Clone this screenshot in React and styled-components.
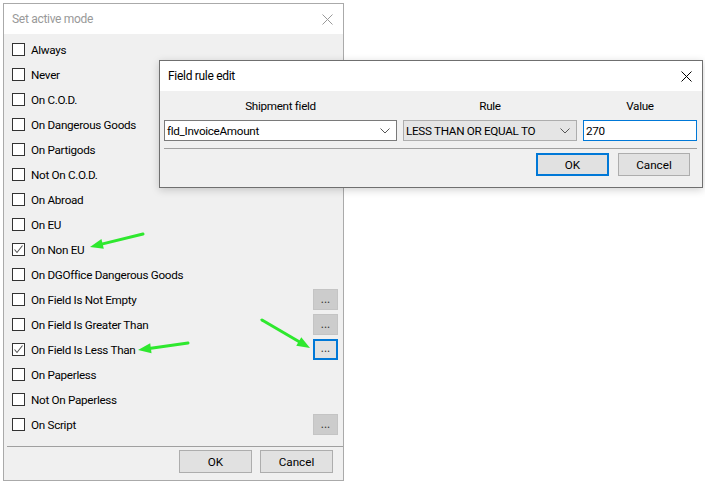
import React from 'react';
import styled, { createGlobalStyle } from 'styled-components';

const GlobalStyle = createGlobalStyle`
  html, body {
    margin: 0;
    padding: 0;
    background: #ffffff;
  }
  body {
    font-family: Roboto, "Liberation Sans", sans-serif;
    font-size: 11.7px;
    letter-spacing: -0.3px;
    color: #000;
  }
`;

const Desktop = styled.div`
  position: relative;
  width: 705px;
  height: 484px;
  overflow: hidden;
  background: #ffffff;
`;

const Window = styled.div`
  position: absolute;
  left: ${(p) => p.left}px;
  top: ${(p) => p.top}px;
  width: ${(p) => p.width}px;
  height: ${(p) => p.height}px;
  box-sizing: border-box;
  border: 1px solid ${(p) => (p.active ? '#6f6f6f' : '#aaaaaa')};
  background: #f0f0f0;
  display: flex;
  flex-direction: column;
  box-shadow: ${(p) => (p.active ? '0 2px 8px rgba(0,0,0,0.18)' : 'none')};
`;

const TitleBar = styled.div`
  height: 30px;
  flex: none;
  background: #ffffff;
  display: flex;
  align-items: center;
  justify-content: space-between;
  padding: 0 10px 0 8px;
  color: ${(p) => (p.active ? '#000' : '#999999')};
  font-size: 12px;
`;

const CloseIcon = ({ color }) => (
  <svg width="11" height="11" viewBox="0 0 11 11">
    <path d="M0.5 0.5 L10.5 10.5 M10.5 0.5 L0.5 10.5" stroke={color} strokeWidth="1" fill="none" />
  </svg>
);

const ModeList = styled.div`
  display: flex;
  flex-direction: column;
  padding: 3px 5px 0 8px;
`;

const ModeRow = styled.div`
  height: 25px;
  display: flex;
  align-items: center;
`;

const Box = styled.span`
  width: 13px;
  height: 13px;
  box-sizing: border-box;
  border: 1px solid #333333;
  background: #ffffff;
  display: inline-flex;
  align-items: center;
  justify-content: center;
  margin-right: 6px;
  flex: none;
`;

const Label = styled.span`
  white-space: nowrap;
`;

const DotsButton = styled.button`
  margin-left: auto;
  width: 25px;
  height: 21px;
  box-sizing: border-box;
  padding: 0 0 4px;
  font: inherit;
  font-size: 12px;
  line-height: 1;
  color: #333;
  background: ${(p) => (p.focused ? '#e1e1e1' : '#cccccc')};
  border: ${(p) => (p.focused ? '2px solid #0078d7' : '1px solid #c4c4c4')};
  display: flex;
  align-items: flex-end;
  justify-content: center;
`;

const Separator = styled.div`
  height: 1px;
  background: #a0a0a0;
  margin: ${(p) => p.margin};
`;

const ButtonRow = styled.div`
  display: flex;
  justify-content: flex-end;
  gap: ${(p) => p.gap}px;
  padding-right: ${(p) => p.right}px;
`;

const PushButton = styled.button`
  width: ${(p) => p.width || 73}px;
  height: 23px;
  box-sizing: border-box;
  font: inherit;
  color: #000;
  background: #e1e1e1;
  border: ${(p) => (p.primary ? '2px solid #0078d7' : '1px solid #adadad')};
  padding: 0;
`;

const RuleBody = styled.div`
  display: flex;
  flex-direction: column;
  padding: 0 5px 0 4px;
`;

const RuleGrid = styled.div`
  display: grid;
  grid-template-columns: 233px 174px 114px;
  column-gap: 6px;
`;

const Header = styled.div`
  height: 29px;
  display: flex;
  align-items: center;
  justify-content: center;
`;

const Combo = styled.div`
  height: 21px;
  box-sizing: border-box;
  border: 1px solid ${(p) => (p.disabled ? '#adadad' : '#7a7a7a')};
  background: ${(p) => (p.disabled ? '#e5e5e5' : '#ffffff')};
  display: flex;
  align-items: center;
  justify-content: space-between;
  padding: 0 6px 0 2px;
  white-space: nowrap;
`;

const TextInput = styled.div`
  height: 21px;
  box-sizing: border-box;
  border: 1px solid #0078d7;
  background: #ffffff;
  display: flex;
  align-items: center;
  padding-left: 2px;
`;

const Chevron = () => (
  <svg width="10" height="6" viewBox="0 0 10 6">
    <path d="M0.5 0.5 L5 5 L9.5 0.5" stroke="#555" strokeWidth="1" fill="none" />
  </svg>
);

const Check = () => (
  <svg width="11" height="11" viewBox="0 0 11 11">
    <path d="M1.5 5.5 L4 8.5 L9.5 1.5" stroke="#555" strokeWidth="1.1" fill="none" />
  </svg>
);

const ArrowLayer = styled.svg`
  position: absolute;
  left: 0;
  top: 0;
  pointer-events: none;
`;

const modes = [
  { label: 'Always' },
  { label: 'Never' },
  { label: 'On C.O.D.' },
  { label: 'On Dangerous Goods' },
  { label: 'On Partigods' },
  { label: 'Not On C.O.D.' },
  { label: 'On Abroad' },
  { label: 'On EU' },
  { label: 'On Non EU', checked: true },
  { label: 'On DGOffice Dangerous Goods' },
  { label: 'On Field Is Not Empty', dots: true },
  { label: 'On Field Is Greater Than', dots: true },
  { label: 'On Field Is Less Than', checked: true, dots: true, focused: true },
  { label: 'On Paperless' },
  { label: 'Not On Paperless' },
  { label: 'On Script', dots: true },
];

const arrows = [
  { x1: 143, y1: 234, x2: 90, y2: 247 },
  { x1: 262, y1: 320, x2: 310, y2: 348 },
  { x1: 188, y1: 343, x2: 138, y2: 350 },
];

const Arrow = ({ x1, y1, x2, y2 }) => {
  const a = Math.atan2(y2 - y1, x2 - x1);
  const len = 13;
  const half = 5;
  const bx = x2 - Math.cos(a) * len;
  const by = y2 - Math.sin(a) * len;
  const px = -Math.sin(a) * half;
  const py = Math.cos(a) * half;
  return (
    <g>
      <line x1={x1} y1={y1} x2={bx} y2={by} stroke="#2ee82e" strokeWidth="3" strokeLinecap="round" />
      <polygon points={`${x2},${y2} ${bx + px},${by + py} ${bx - px},${by - py}`} fill="#2ee82e" />
    </g>
  );
};

export default function App() {
  return (
    <Desktop>
      <GlobalStyle />
      <Window left={3} top={3} width={341} height={478}>
        <TitleBar>
          <span>Set active mode</span>
          <CloseIcon color="#999" />
        </TitleBar>
        <ModeList>
          {modes.map((m) => (
            <ModeRow key={m.label}>
              <Box>{m.checked && <Check />}</Box>
              <Label>{m.label}</Label>
              {m.dots && <DotsButton focused={m.focused}>...</DotsButton>}
            </ModeRow>
          ))}
        </ModeList>
        <Separator margin="9px 0 3px 3px" />
        <ButtonRow gap={8} right={10}>
          <PushButton>OK</PushButton>
          <PushButton>Cancel</PushButton>
        </ButtonRow>
      </Window>

      <Window active left={159} top={60} width={544} height={128}>
        <TitleBar active>
          <span>Field rule edit</span>
          <CloseIcon color="#000" />
        </TitleBar>
        <RuleBody>
          <RuleGrid>
            <Header>Shipment field</Header>
            <Header>Rule</Header>
            <Header>Value</Header>
            <Combo>
              <span>fld_InvoiceAmount</span>
              <Chevron />
            </Combo>
            <Combo disabled>
              <span>LESS THAN OR EQUAL TO</span>
              <Chevron />
            </Combo>
            <TextInput>270</TextInput>
          </RuleGrid>
          <Separator margin="7px 0 4px 0" />
          <ButtonRow gap={9} right={7}>
            <PushButton primary width={73}>OK</PushButton>
            <PushButton width={72}>Cancel</PushButton>
          </ButtonRow>
        </RuleBody>
      </Window>

      <ArrowLayer width="705" height="484" viewBox="0 0 705 484">
        {arrows.map((a, i) => (
          <Arrow key={i} {...a} />
        ))}
      </ArrowLayer>
    </Desktop>
  );
}
